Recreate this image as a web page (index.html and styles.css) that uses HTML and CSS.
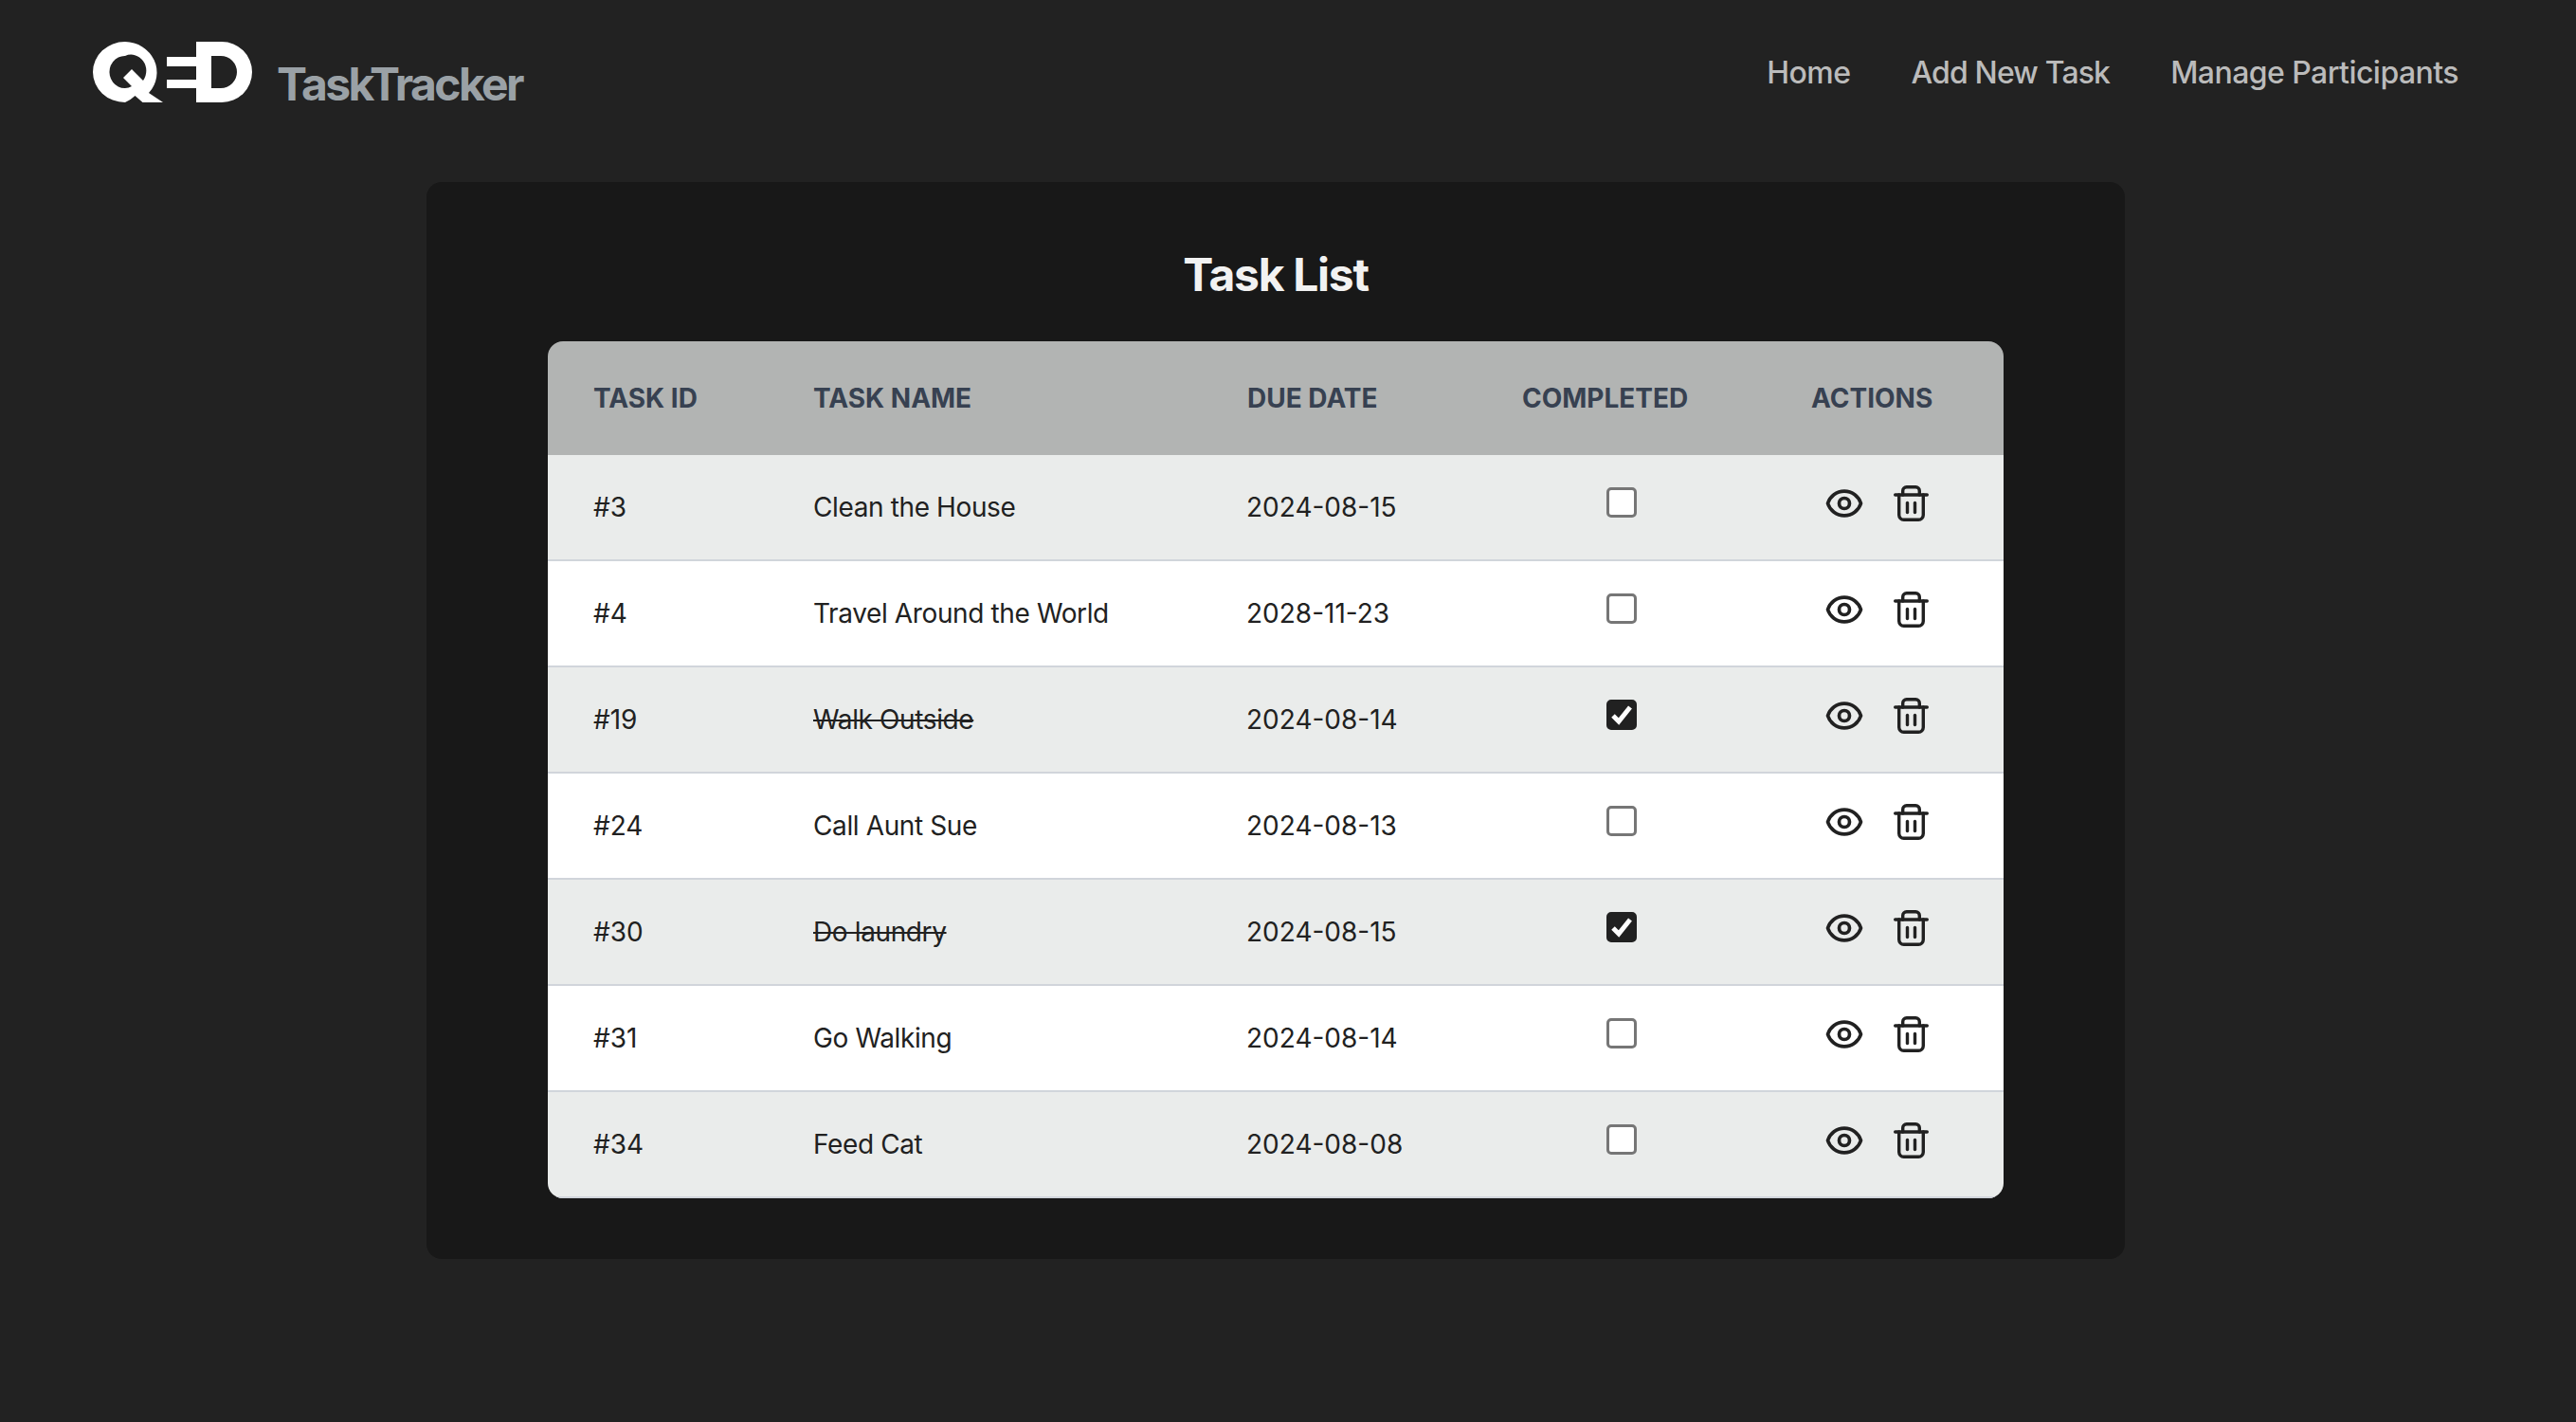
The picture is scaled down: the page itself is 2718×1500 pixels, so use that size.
FILE: index.html
```html
<!DOCTYPE html>
<html lang="en">
<head>
    <meta charset="UTF-8">
    <title>TaskTracker</title>
    <link rel="stylesheet" href="styles.css">
</head>
<body>
<svg class="sprites" width="0" height="0">
    <symbol id="eye" viewBox="0 0 24 24">
        <path d="M15 12a3 3 0 11-6 0 3 3 0 016 0z"/>
        <path d="M2.458 12C3.732 7.943 7.523 5 12 5c4.478 0 8.268 2.943 9.542 7-1.274 4.057-5.064 7-9.542 7-4.477 0-8.268-2.943-9.542-7z"/>
    </symbol>
    <symbol id="trash" viewBox="0 0 42 46">
        <path d="M3.700 14h33.600"/>
        <path d="M11.700 14v-4.300a4 4 0 0 1 4 -4h9.600a4 4 0 0 1 4 4v4.300"/>
        <path d="M7.700 14v21.300a5 5 0 0 0 5 5h15.600a5 5 0 0 0 5 -5v-21.300"/>
        <path d="M16.500 22.500v10"/>
        <path d="M24.500 22.500v10"/>
    </symbol>
</svg>

<header class="topbar">
    <a class="brand" href="#">
        <svg class="logo" viewBox="0 0 170 64" width="170" height="64">
            <path fill-rule="evenodd" d="M34 0a34 32.500 0 0 1 25 54l15 10h-.5l-21 0l-8 -7a34 32 0 0 1 -10.500 7a34 32 0 1 1 0 -64zM34 15a16 17 0 1 0 7 32l-9 -9l9 -9l12 12a16 17 0 0 0 -19 -26z" fill="#fff"/>
            <path fill-rule="evenodd" d="M109 0h27a32 32 0 0 1 0 64h-27v-15h-31v-9h31v-14h-31v-10h31zM125 15v34h10a17 17 0 0 0 0 -34z" fill="#fff"/>
        </svg>
        <span class="brand-name">TaskTracker</span>
    </a>
    <nav class="nav">
        <a href="#">Home</a>
        <a class="nav-add" href="#">Add New Task</a>
        <a href="#">Manage Participants</a>
    </nav>
</header>

<main class="card">
    <h1>Task List</h1>
    <div class="table-wrap">
        <table class="tasks">
            <colgroup>
                <col class="col-id">
                <col class="col-name">
                <col class="col-date">
                <col class="col-done">
                <col class="col-actions">
            </colgroup>
            <thead>
            <tr>
                <th>Task ID</th>
                <th>Task Name</th>
                <th class="due">Due Date</th>
                <th>Completed</th>
                <th>Actions</th>
            </tr>
            </thead>
            <tbody>
            <tr>
                <td>#3</td>
                <td class="name">Clean the House</td>
                <td>2024-08-15</td>
                <td class="done"><input type="checkbox"></td>
                <td><div class="actions"><svg class="eye"><use href="#eye"/></svg><svg class="trash"><use href="#trash"/></svg></div></td>
            </tr>
            <tr>
                <td>#4</td>
                <td class="name">Travel Around the World</td>
                <td>2028-11-23</td>
                <td class="done"><input type="checkbox"></td>
                <td><div class="actions"><svg class="eye"><use href="#eye"/></svg><svg class="trash"><use href="#trash"/></svg></div></td>
            </tr>
            <tr>
                <td>#19</td>
                <td class="name"><s>Walk Outside</s></td>
                <td>2024-08-14</td>
                <td class="done"><input type="checkbox" checked></td>
                <td><div class="actions"><svg class="eye"><use href="#eye"/></svg><svg class="trash"><use href="#trash"/></svg></div></td>
            </tr>
            <tr>
                <td>#24</td>
                <td class="name">Call Aunt Sue</td>
                <td>2024-08-13</td>
                <td class="done"><input type="checkbox"></td>
                <td><div class="actions"><svg class="eye"><use href="#eye"/></svg><svg class="trash"><use href="#trash"/></svg></div></td>
            </tr>
            <tr>
                <td>#30</td>
                <td class="name"><s>Do laundry</s></td>
                <td>2024-08-15</td>
                <td class="done"><input type="checkbox" checked></td>
                <td><div class="actions"><svg class="eye"><use href="#eye"/></svg><svg class="trash"><use href="#trash"/></svg></div></td>
            </tr>
            <tr>
                <td>#31</td>
                <td class="name">Go Walking</td>
                <td>2024-08-14</td>
                <td class="done"><input type="checkbox"></td>
                <td><div class="actions"><svg class="eye"><use href="#eye"/></svg><svg class="trash"><use href="#trash"/></svg></div></td>
            </tr>
            <tr>
                <td>#34</td>
                <td class="name">Feed Cat</td>
                <td>2024-08-08</td>
                <td class="done"><input type="checkbox"></td>
                <td><div class="actions"><svg class="eye"><use href="#eye"/></svg><svg class="trash"><use href="#trash"/></svg></div></td>
            </tr>
            </tbody>
        </table>
    </div>
</main>
</body>
</html>
```

FILE: styles.css
```css
* {
    margin: 0;
    padding: 0;
    box-sizing: border-box;
}

body {
    background-color: #222;
    font-family: Inter, "Liberation Sans", sans-serif;
    padding-right: 26px;
    min-height: 1500px;
}

a {
    text-decoration: none;
    color: inherit;
}

.sprites {
    position: absolute;
}

.topbar {
    display: flex;
    justify-content: space-between;
    align-items: flex-start;
    padding: 44px 98px 0;
}

.brand {
    display: flex;
    align-items: flex-end;
    gap: 24px;
}

.logo {
    display: block;
}

.brand-name {
    font-size: 48px;
    line-height: 58px;
    font-weight: 700;
    letter-spacing: -2.6px;
    color: #9aa1a6;
    margin-bottom: -10px;
}

.nav {
    display: flex;
    gap: 64px;
    padding-top: 9px;
    font-size: 32px;
    line-height: 48px;
    font-weight: 500;
    letter-spacing: -0.55px;
    color: #bbb;
}

.nav-add {
    letter-spacing: -0.85px;
}

.card {
    width: 1792px;
    margin: 84px auto 0;
    padding: 62px 128px 64px;
    background-color: #181818;
    border-radius: 16px;
}

h1 {
    font-size: 48px;
    line-height: 72px;
    font-weight: 700;
    letter-spacing: -1.3px;
    color: #f2f2f2;
    text-align: center;
    margin-bottom: 34px;
}

.table-wrap {
    border-radius: 16px;
    overflow: hidden;
}

.tasks {
    width: 100%;
    table-layout: fixed;
    border-collapse: separate;
    border-spacing: 0;
    font-size: 28px;
    color: #212121;
}

.col-id { width: 232px; }
.col-name { width: 457px; }
.col-date { width: 291px; }
.col-done { width: 305px; }
.col-actions { width: 251px; }

.tasks th {
    height: 120px;
    padding: 0 0 0 48px;
    background-color: #b2b4b3;
    color: #374151;
    font-weight: 700;
    text-align: left;
    text-transform: uppercase;
    white-space: nowrap;
}

.tasks th.due {
    padding-left: 49px;
}

.tasks td {
    height: 112px;
    padding: 0 0 0 48px;
    border-bottom: 2px solid #d1d5db;
    background-color: #fff;
    white-space: nowrap;
}

.tasks tbody tr:nth-child(odd) td {
    background-color: #eaeceb;
}

.tasks td.name {
    letter-spacing: -0.38px;
}

.tasks td.done {
    padding: 0;
    text-align: center;
}

.done input {
    display: inline-block;
    vertical-align: middle;
    appearance: none;
    width: 32px;
    height: 32px;
    margin-bottom: 10px;
    background-color: #fff;
    border: 3px solid #767676;
    border-radius: 5px;
}

.done input:checked {
    border-color: #212121;
    background: #212121 url("data:image/svg+xml,%3Csvg xmlns='http://www.w3.org/2000/svg' viewBox='0 0 26 26'%3E%3Cpath d='M4 14l6 6l12 -15' fill='none' stroke='%23fff' stroke-width='5'/%3E%3C/svg%3E") center / 26px 26px no-repeat;
}

.actions {
    display: flex;
    align-items: center;
    gap: 28px;
    padding: 0 0 8px 13px;
}

.actions svg {
    display: block;
    fill: none;
    stroke: #212121;
    stroke-linecap: round;
    stroke-linejoin: round;
}

.eye {
    width: 44px;
    height: 44px;
    stroke-width: 2;
}

.trash {
    width: 42px;
    height: 46px;
    stroke-width: 3.4;
}
```
